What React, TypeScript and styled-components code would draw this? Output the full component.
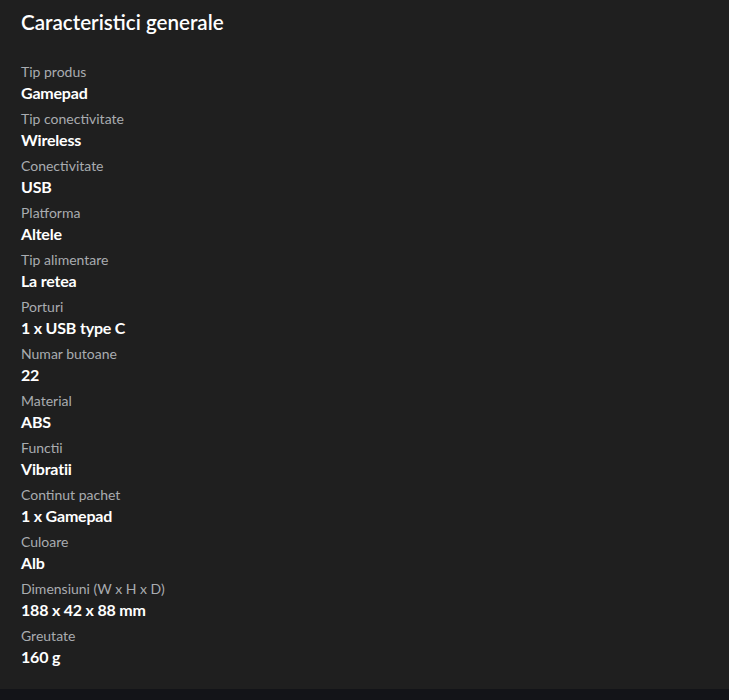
import React from "react";
import styled, { createGlobalStyle } from "styled-components";

const Global = createGlobalStyle`
  html, body { margin: 0; padding: 0; background: #131418; }
  body { font-family: "Lato", "Open Sans", sans-serif; }
`;

const Page = styled.section`
  background: #1f1f1f;
  height: 689px;
  box-sizing: border-box;
  padding: 9px 21px 21px;
  display: flex;
  flex-direction: column;
`;

const Title = styled.h2`
  margin: 0 0 27px;
  font-size: 20.6px;
  line-height: 26px;
  font-weight: 600;
  color: #ffffff;
`;

const List = styled.dl`
  margin: 0;
  display: flex;
  flex-direction: column;
  gap: 5px;
`;

const Item = styled.div`
  display: flex;
  flex-direction: column;
`;

const Label = styled.dt`
  font-size: 14px;
  line-height: 20px;
  color: #a9acb0;
`;

const Value = styled.dd`
  margin: 0;
  font-size: 16px;
  line-height: 22px;
  font-weight: 700;
  letter-spacing: -0.2px;
  color: #ffffff;
`;

const specs: [string, string][] = [
  ["Tip produs", "Gamepad"],
  ["Tip conectivitate", "Wireless"],
  ["Conectivitate", "USB"],
  ["Platforma", "Altele"],
  ["Tip alimentare", "La retea"],
  ["Porturi", "1 x USB type C"],
  ["Numar butoane", "22"],
  ["Material", "ABS"],
  ["Functii", "Vibratii"],
  ["Continut pachet", "1 x Gamepad"],
  ["Culoare", "Alb"],
  ["Dimensiuni (W x H x D)", "188 x 42 x 88 mm"],
  ["Greutate", "160 g"],
];

export default function App() {
  return (
    <>
      <Global />
      <Page>
        <Title>Caracteristici generale</Title>
        <List>
          {specs.map(([l, v]) => (
            <Item key={l}>
              <Label>{l}</Label>
              <Value>{v}</Value>
            </Item>
          ))}
        </List>
      </Page>
    </>
  );
}
